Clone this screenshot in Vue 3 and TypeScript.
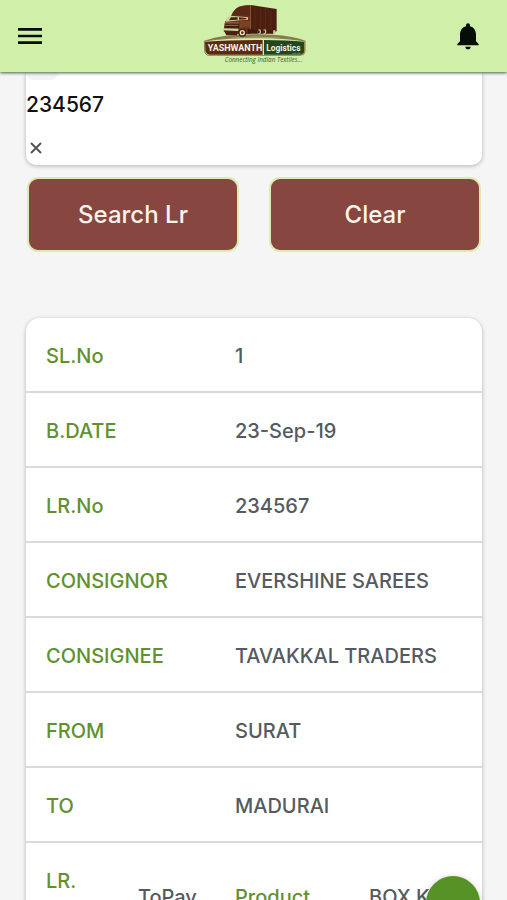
<script setup lang="ts">
import { ref } from 'vue'

interface Detail {
  label: string
  value: string
}

const lrNumber = ref<string>('234567')

const details: Detail[] = [
  { label: 'SL.No', value: '1' },
  { label: 'B.DATE', value: '23-Sep-19' },
  { label: 'LR.No', value: '234567' },
  { label: 'CONSIGNOR', value: 'EVERSHINE SAREES' },
  { label: 'CONSIGNEE', value: 'TAVAKKAL TRADERS' },
  { label: 'FROM', value: 'SURAT' },
  { label: 'TO', value: 'MADURAI' },
]

function clearNumber(): void {
  lrNumber.value = ''
}
</script>

<template>
  <div class="app">
    <header class="topbar">
      <button class="icon-button" type="button" aria-label="Menu">
        <svg class="icon" viewBox="0 0 24 24"><path d="M3 18h18v-2H3v2zm0-5h18v-2H3v2zm0-7v2h18V6H3z" /></svg>
      </button>
      <svg class="logo" viewBox="24 6 312 189" role="img" aria-label="Yashwanth Logistics">
        <path d="M28 119Q90 98 190 100Q285 101 330 119Q250 107 180 107Q95 108 28 119z" fill="#8b7a4a" />
        <path d="M30 122Q110 117 203 117V161H44Q32 160 31 148z" fill="#5c2a12" />
        <path d="M207 117Q275 117 328 122V150Q327 160 316 161H207z" fill="#24451f" />
        <path d="M28 120Q100 109 190 110Q270 110 330 120V151Q329 163 317 163H42Q30 163 29 149z" fill="none" stroke="#6a4a28" stroke-width="2" />
        <path d="M167 12L245 24V91L232 97L167 88z" fill="#4d1f10" />
        <path d="M180 19V86M196 22V88M212 24V90M228 27V93" stroke="#5e2c1a" stroke-width="2" />
        <path d="M167 12L145 14Q124 16 116 34L105 48L90 62L86 91L98 99H167z" fill="#6a3219" />
        <path d="M145 14L163 13L165 44L110 42Q118 18 145 14z" fill="#5a2814" />
        <path d="M94 52L105 44L159 49V56L134 58L93 62z" fill="#c9d3a0" />
        <path d="M108 49H128V56L102 58zM132 49L154 51V55L132 56z" fill="#4d1f10" />
        <path d="M90 66H132V80H88z" fill="#3d1a0c" />
        <path d="M90 66H132M89 73H130" stroke="#b9a878" stroke-width="2" />
        <path d="M84 82L130 83V90L84 88z" fill="#cbd5a4" />
        <path d="M134 60H165V78L146 77L135 84z" fill="#7a4225" />
        <path d="M158 84L236 90V98H158z" fill="#3d1a0c" />
        <g fill="#c9c79b">
          <ellipse cx="193" cy="92" rx="5" ry="7" />
          <ellipse cx="209" cy="92" rx="5" ry="7" />
          <ellipse cx="238" cy="93" rx="4" ry="6" />
        </g>
        <g fill="#3d1a0c">
          <ellipse cx="191" cy="92" rx="3" ry="5" />
          <ellipse cx="207" cy="92" rx="3" ry="5" />
        </g>
        <path d="M88 91H130L126 103H94z" fill="#4d1f10" />
        <circle cx="142" cy="95" r="12" fill="#3d1a0c" />
        <circle cx="142" cy="95" r="8" fill="#e6ebc8" />
        <circle cx="142" cy="95" r="4" fill="#5a2814" />
        <text class="logo-name" x="38" y="150" font-size="27">YASHWANTH</text>
        <text class="logo-name" x="214" y="149" font-size="25">Logistics</text>
        <text class="logo-small" x="292" y="159" font-size="7">Pvt. Ltd.</text>
        <text class="logo-tag" x="89" y="184" font-size="19">Connecting Indian Textiles...</text>
      </svg>
      <button class="icon-button bell" type="button" aria-label="Notifications">
        <svg class="icon" viewBox="0 0 24 24"><path d="M12 22c1.1 0 2-.9 2-2h-4c0 1.1.89 2 2 2zm6-6v-5c0-3.07-1.64-5.64-4.5-6.32V4c0-.83-.67-1.5-1.5-1.5s-1.5.67-1.5 1.5v.68C7.63 5.36 6 7.92 6 11v5l-2 2v1h16v-1l-2-2z" /></svg>
      </button>
    </header>

    <main class="content">
      <form @submit.prevent>
        <div class="search-card">
          <div class="tab-edge"></div>
          <input v-model="lrNumber" class="lr-input" type="text" inputmode="numeric" aria-label="LR number" />
          <button class="clear-icon" type="button" aria-label="Clear number" @click="clearNumber">
            <svg viewBox="0 0 12 12"><path d="M1 1L11 11M11 1L1 11" /></svg>
          </button>
        </div>
        <div class="actions">
          <button class="action" type="submit">Search Lr</button>
          <button class="action" type="button" @click="clearNumber">Clear</button>
        </div>
      </form>

      <div class="result-card">
        <table class="result">
          <colgroup>
            <col class="col-a" />
            <col class="col-b" />
            <col class="col-c" />
            <col />
          </colgroup>
          <tbody>
            <tr v-for="item in details" :key="item.label">
              <th scope="row" colspan="2">{{ item.label }}</th>
              <td colspan="2">{{ item.value }}</td>
            </tr>
            <tr>
              <th scope="row">LR. Type</th>
              <td>ToPay</td>
              <th scope="row">Product</th>
              <td>BOX K</td>
            </tr>
          </tbody>
        </table>
      </div>
    </main>

    <button class="fab" type="button" aria-label="More actions"></button>
  </div>
</template>

<style>
body {
  background: #f5f5f5;
}
</style>

<style scoped>
.app {
  display: flex;
  flex-direction: column;
  height: 100vh;
  overflow: hidden;
  background: #f5f5f5;
  font-family: Inter, "Liberation Sans", sans-serif;
}

button {
  font-family: inherit;
  cursor: pointer;
}

.topbar {
  position: relative;
  z-index: 1;
  display: flex;
  flex: none;
  align-items: center;
  justify-content: space-between;
  height: 72px;
  padding: 0 14px;
  background: #d0efa9;
  box-shadow: 0 1px 3px #3f6135;
}

.icon-button {
  display: flex;
  padding: 0;
  border: 0;
  background: none;
}

.bell {
  margin-right: 9px;
}

.icon {
  width: 32px;
  height: 32px;
  fill: #060d04;
}

.logo {
  width: 104px;
  height: 63px;
  margin: 0 0 4px 12px;
  overflow: visible;
}

.logo-name {
  fill: #f3f3df;
  font-family: Roboto, sans-serif;
  font-weight: 700;
}

.logo-small {
  fill: #c5d3a8;
  font-family: Roboto, sans-serif;
}

.logo-tag {
  fill: #3f5a2c;
  font-family: "Open Sans", sans-serif;
  font-style: italic;
  font-weight: 500;
}

.content {
  flex: 1;
  min-height: 0;
  padding: 0 25px 0 26px;
  overflow: hidden;
}

.search-card {
  display: flex;
  flex-direction: column;
  align-items: flex-start;
  padding-bottom: 3px;
  border-radius: 0 0 10px 10px;
  background: #fff;
  box-shadow: 0 1px 4px rgba(0, 0, 0, 0.28);
}

.tab-edge {
  width: 32px;
  height: 8px;
  border-radius: 0 0 12px 12px;
  background: #f3f3f3;
}

.lr-input {
  box-sizing: border-box;
  width: 100%;
  height: 48px;
  padding: 0;
  border: 0;
  outline: none;
  background: transparent;
  color: #111;
  font-family: inherit;
  font-size: 21px;
  font-weight: 500;
}

.clear-icon {
  display: flex;
  padding: 14px 4px 8px;
  border: 0;
  background: none;
}

.clear-icon svg {
  width: 12px;
  height: 12px;
  fill: none;
  stroke: #555;
  stroke-width: 2;
}

.actions {
  display: grid;
  grid-template-columns: 1fr 1fr;
  gap: 30px;
  padding: 12px 1px 0;
}

.action {
  height: 75px;
  border: 2px solid #dcebb4;
  border-radius: 11px;
  background: #87463f;
  color: #fdf3ea;
  font-size: 24px;
  font-weight: 500;
}

.result-card {
  margin-top: 66px;
  overflow: hidden;
  border-radius: 14px;
  background: #fff;
  box-shadow: 0 1px 4px rgba(0, 0, 0, 0.28);
}

.result {
  width: 100%;
  border-spacing: 0;
  table-layout: fixed;
}

.col-a {
  width: 92px;
}

.col-b {
  width: 97px;
}

.col-c {
  width: 134px;
}

.result th,
.result td {
  padding: 22px 0 19px 20px;
  border-bottom: 2px solid #dadada;
  color: #555a60;
  font-size: 20px;
  font-weight: 500;
  line-height: 32px;
  text-align: left;
}

.result th {
  color: #5f9130;
}

.fab {
  position: fixed;
  right: 27px;
  bottom: -30px;
  z-index: 2;
  width: 54px;
  height: 54px;
  border: 0;
  border-radius: 50%;
  background: #569226;
  box-shadow: 0 1px 6px rgba(0, 0, 0, 0.2);
}
</style>
